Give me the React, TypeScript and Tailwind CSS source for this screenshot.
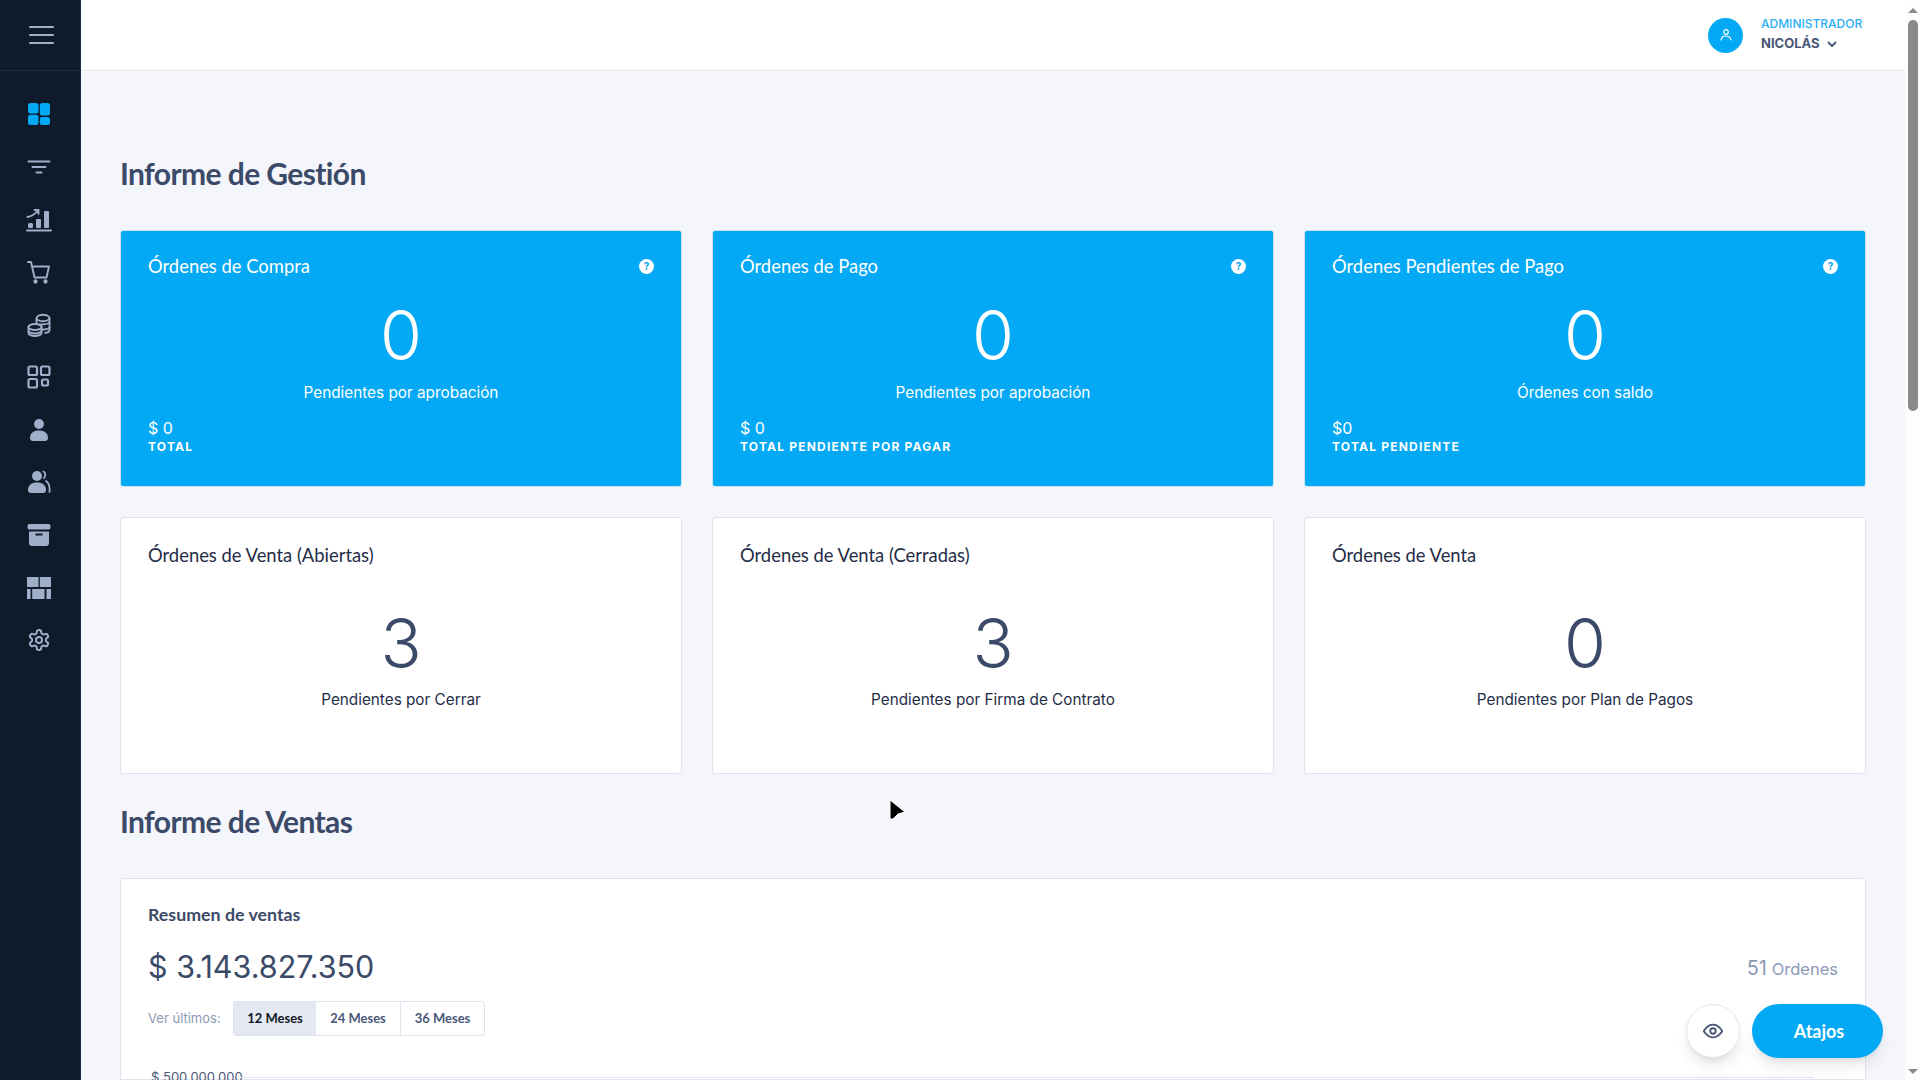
const titleFont = "font-['Lato',sans-serif]"

const blueCards = [
  { title: 'Órdenes de Compra', sub: 'Pendientes por aprobación', amount: '$ 0', label: 'TOTAL' },
  { title: 'Órdenes de Pago', sub: 'Pendientes por aprobación', amount: '$ 0', label: 'TOTAL PENDIENTE POR PAGAR' },
  { title: 'Órdenes Pendientes de Pago', sub: 'Órdenes con saldo', amount: '$0', label: 'TOTAL PENDIENTE' },
]

const whiteCards = [
  { title: 'Órdenes de Venta (Abiertas)', value: '3', sub: 'Pendientes por Cerrar' },
  { title: 'Órdenes de Venta (Cerradas)', value: '3', sub: 'Pendientes por Firma de Contrato' },
  { title: 'Órdenes de Venta', value: '0', sub: 'Pendientes por Plan de Pagos' },
]

function DashboardIcon() {
  return (
    <svg width="22" height="22" viewBox="0 0 22 22" fill="#03a9f4">
      <rect x="0" y="0" width="10.500" height="10.500" rx="2.500" />
      <rect x="11.800" y="0" width="10.200" height="12.500" rx="2.500" />
      <rect x="0" y="11.800" width="10.500" height="10.200" rx="2.500" />
      <rect x="11.800" y="14" width="10.200" height="8" rx="2.500" />
    </svg>
  )
}

function FilterIcon() {
  return (
    <svg width="24" height="24" viewBox="0 0 24 24" fill="none" stroke="#9fafc9" strokeWidth="2" strokeLinecap="round">
      <path d="M1.500 6.500h21M5.500 12h13M9.500 17.500h5" />
    </svg>
  )
}

function ChartIcon() {
  return (
    <svg className="mt-[3px]" width="26" height="26" viewBox="0 0 26 26" fill="#9fafc9">
      <rect x="2" y="15" width="5" height="5" rx="1.500" />
      <rect x="10" y="11" width="5" height="9" rx="1" />
      <rect x="18" y="3" width="5" height="17" rx="1" />
      <path d="M1 22.500h24" stroke="#9fafc9" strokeWidth="2" strokeLinecap="round" />
      <path d="M1.500 9C5 8.500 9 6 12 2.500M8.500 2h4v4" fill="none" stroke="#9fafc9" strokeWidth="1.800" strokeLinecap="round" />
    </svg>
  )
}

function CartIcon() {
  return (
    <svg width="24" height="24" viewBox="0 0 24 24" fill="none" stroke="#9fafc9" strokeWidth="1.900" strokeLinecap="round" strokeLinejoin="round">
      <path d="M1 2h3l3.500 15.500h12L22 6.500H5" />
      <circle cx="8.500" cy="21.500" r="1.200" fill="#9fafc9" />
      <circle cx="18.500" cy="21.500" r="1.200" fill="#9fafc9" />
    </svg>
  )
}

function CoinsIcon() {
  return (
    <svg width="24" height="24" viewBox="0 0 24 24" fill="none" stroke="#9fafc9" strokeWidth="1.900">
      <ellipse cx="16" cy="5" rx="6.500" ry="3.200" />
      <path d="M9.500 5v6M22.500 5v12c0 1.500-2 2.700-5 3" />
      <path d="M12 11.500c5 0 10.500-.5 10.500-2.500M15 16.500c3 0 7.500-.5 7.500-2.500" />
      <path d="M1.500 14v6c0 1.700 3 3 6.500 3s6.500-1.300 6.500-3v-6z" fill="#0f1a2b" />
      <ellipse cx="8" cy="14" rx="6.500" ry="3" fill="#0f1a2b" />
      <path d="M1.500 17.500c0 1.700 3 3 6.500 3s6.500-1.300 6.500-3" />
    </svg>
  )
}

function AppsIcon() {
  return (
    <svg width="24" height="24" viewBox="0 0 24 24" fill="none" stroke="#9fafc9" strokeWidth="2.200">
      <rect x="1.500" y="1.500" width="8.500" height="8.500" rx="1.500" />
      <rect x="14" y="1.500" width="8.500" height="8.500" rx="1.500" />
      <rect x="1.500" y="14" width="8.500" height="8.500" rx="1.500" />
      <rect x="15" y="14.500" width="6" height="6" rx="1.500" />
    </svg>
  )
}

function UserIcon() {
  return (
    <svg width="24" height="24" viewBox="0 0 24 24" fill="#9fafc9">
      <circle cx="12" cy="6" r="5" />
      <path d="M3 20c0-5 3.500-7.500 9-7.500s9 2.500 9 7.500c0 2-1 3-3 3H6c-2 0-3-1-3-3z" />
    </svg>
  )
}

function UsersIcon() {
  return (
    <svg width="24" height="24" viewBox="0 0 24 24" fill="#9fafc9">
      <circle cx="10" cy="6" r="5" />
      <path d="M1 20c0-5 3.500-7.500 9-7.500s9 2.500 9 7.500c0 2-1 3-3 3H4c-2 0-3-1-3-3z" />
      <path d="M16.500 1.500c2 1 2.500 4 .5 6.500M19 11c3 2 4 6 3.500 11" fill="none" stroke="#9fafc9" strokeWidth="1.800" strokeLinecap="round" />
    </svg>
  )
}

function ArchiveIcon() {
  return (
    <svg width="24" height="24" viewBox="0 0 24 24" fill="#9fafc9">
      <path d="M2.500 1h19a2 2 0 0 1 2 2v1.500a2 2 0 0 1-2 2h-19a2 2 0 0 1-2-2V3a2 2 0 0 1 2-2z" />
      <path d="M2 8.500h20V20a3 3 0 0 1-3 3H5a3 3 0 0 1-3-3z" />
      <rect x="8.500" y="10.500" width="7" height="2" fill="#0f1a2b" />
    </svg>
  )
}

function TableIcon() {
  return (
    <svg width="26" height="24" viewBox="0 0 26 24" fill="#9fafc9">
      <rect x="1" y="1" width="11.500" height="10" />
      <rect x="13.800" y="1" width="11.200" height="10" />
      <rect x="1" y="13" width="3.600" height="10" />
      <rect x="6.200" y="13" width="12.300" height="10" />
      <rect x="20.500" y="13" width="4.500" height="10" />
    </svg>
  )
}

function GearIcon() {
  return (
    <svg width="24" height="24" viewBox="0 0 24 24" fill="none" stroke="#9fafc9" strokeWidth="2" strokeLinecap="round" strokeLinejoin="round">
      <path d="M12.220 2h-.440a2 2 0 0 0-2 2v.180a2 2 0 0 1-1 1.730l-.430.250a2 2 0 0 1-2 0l-.150-.080a2 2 0 0 0-2.730.730l-.220.380a2 2 0 0 0 .730 2.730l.150.100a2 2 0 0 1 1 1.720v.510a2 2 0 0 1-1 1.740l-.150.090a2 2 0 0 0-.730 2.730l.220.380a2 2 0 0 0 2.730.730l.150-.080a2 2 0 0 1 2 0l.430.250a2 2 0 0 1 1 1.730V20a2 2 0 0 0 2 2h.440a2 2 0 0 0 2-2v-.180a2 2 0 0 1 1-1.730l.430-.250a2 2 0 0 1 2 0l.150.080a2 2 0 0 0 2.730-.730l.220-.390a2 2 0 0 0-.730-2.730l-.150-.080a2 2 0 0 1-1-1.740v-.500a2 2 0 0 1 1-1.740l.150-.090a2 2 0 0 0 .730-2.730l-.220-.380a2 2 0 0 0-2.730-.730l-.150.080a2 2 0 0 1-2 0l-.430-.250a2 2 0 0 1-1-1.730V4a2 2 0 0 0-2-2z" />
      <circle cx="12" cy="12" r="3" />
    </svg>
  )
}

const navIcons = [DashboardIcon, FilterIcon, ChartIcon, CartIcon, CoinsIcon, AppsIcon, UserIcon, UsersIcon, ArchiveIcon, TableIcon, GearIcon]

function Sidebar() {
  return (
    <aside className="w-[81px] shrink-0 bg-[#0f1a2b] border-r border-[#1c2d4d] flex flex-col">
      <div className="h-[71px] shrink-0 border-b border-[#1c2d4d] flex items-center justify-center pl-[2px]">
        <div className="w-[25px] flex flex-col gap-[6px]">
          <div className="h-[2px] rounded bg-[#9fafc9]" />
          <div className="h-[2px] rounded bg-[#9fafc9]" />
          <div className="h-[2px] rounded bg-[#9fafc9]" />
        </div>
      </div>
      <nav className="pt-[17px] pr-[2px] flex flex-col">
        {navIcons.map((Icon, i) => (
          <div key={i} className="h-[52.6px] flex items-center justify-center">
            <Icon />
          </div>
        ))}
      </nav>
    </aside>
  )
}

function Header() {
  return (
    <header className="h-[71px] shrink-0 bg-white border-b border-[#e6e9f2] flex items-center justify-end pr-[43px]">
      <div className="w-[35px] h-[35px] rounded-full bg-[#03a9f4] flex items-center justify-center mr-[18px]">
        <svg width="14" height="14" viewBox="0 0 14 14" fill="none" stroke="#fff" strokeWidth="1.200" strokeLinecap="round">
          <circle cx="7" cy="4" r="2.300" />
          <path d="M2 12c.5-2.500 2.500-4 5-4s4.500 1.500 5 4" />
        </svg>
      </div>
      <div className="w-[101px] font-['Inter',sans-serif] pb-[3px]">
        <div className="text-[12px] font-medium leading-[20px] text-[#2aaef5]">ADMINISTRADOR</div>
        <div className="flex items-center gap-[7px] text-[13px] font-bold leading-[19px] text-[#4a5876]">
          NICOLÁS
          <svg width="10" height="10" viewBox="0 0 10 10" fill="none" stroke="#4a5876" strokeWidth="1.800" strokeLinecap="round" strokeLinejoin="round">
            <path d="M1.500 3.500 5 7l3.500-3.500" />
          </svg>
        </div>
      </div>
    </header>
  )
}

function HelpDot() {
  return (
    <div className="w-[15px] h-[15px] rounded-full bg-white flex items-center justify-center text-[10px] font-bold leading-none text-[#03a9f4] font-['Inter',sans-serif]">
      ?
    </div>
  )
}

function BlueCard({ title, sub, amount, label }: { title: string; sub: string; amount: string; label: string }) {
  return (
    <div className="h-[257px] rounded-[3px] bg-[#03a9f4] border border-[#cfe3f3] px-[27px] pt-[23px] text-white flex flex-col">
      <div className="flex items-center justify-between">
        <h3 className={`${titleFont} text-[18.400px] leading-[24px] font-normal`}>{title}</h3>
        <HelpDot />
      </div>
      <div className="mt-[21px] text-center font-['Inter',sans-serif] text-[68px] leading-[72px] font-light">0</div>
      <div className="mt-[11px] text-center font-['Inter',sans-serif] text-[15.300px] leading-[22px]">{sub}</div>
      <div className="mt-[13px] font-['Inter',sans-serif] text-[16px] leading-[22px]">{amount}</div>
      <div className="font-['Inter',sans-serif] text-[12px] leading-[15px] font-bold tracking-[1.200px]">{label}</div>
    </div>
  )
}

function WhiteCard({ title, value, sub }: { title: string; value: string; sub: string }) {
  return (
    <div className="h-[257px] rounded-[3px] bg-white border border-[#dfe3ee] px-[27px] pt-[24px] text-[#3b4a68] flex flex-col">
      <h3 className={`${titleFont} text-[18.400px] leading-[26px] font-normal text-[#1f2d47]`}>{title}</h3>
      <div className="mt-[39px] text-center font-['Inter',sans-serif] text-[68px] leading-[72px] font-light">{value}</div>
      <div className="mt-[10px] text-center font-['Inter',sans-serif] text-[15.300px] leading-[22px] text-[#1f2d47]">{sub}</div>
    </div>
  )
}

function SalesCard() {
  return (
    <div className="flex-1 rounded-t-[3px] bg-white border border-[#dfe3ee] px-[27px] pt-[23px]">
      <h3 className={`${titleFont} text-[17.800px] leading-[25px] font-bold text-[#3b4a68]`}>Resumen de ventas</h3>
      <div className="mt-[20px] flex items-end justify-between">
        <div className="font-['Inter',sans-serif] text-[30.500px] leading-[40px] text-[#3b4a68]">$ 3.143.827.350</div>
        <div className="mb-[4px] font-['Inter',sans-serif] text-[16.500px] leading-[28px] text-[#8a9ab5]">
          <span className="text-[20px]">51</span> Ordenes
        </div>
      </div>
      <div className="mt-[14px] flex items-center">
        <span className="font-['Inter',sans-serif] text-[13px] text-[#8a9ab5] w-[85px]">Ver últimos:</span>
        <div className="flex h-[35px] rounded-[3px] border border-[#dfe3ee] overflow-hidden font-['Lato',sans-serif] text-[13px] font-bold">
          <div className="w-[82px] bg-[#e4e8f2] text-[#111827] flex items-center justify-center">12 Meses</div>
          <div className="w-[85px] border-r border-[#dfe3ee] text-[#4a5876] flex items-center justify-center">24 Meses</div>
          <div className="w-[83px] text-[#4a5876] flex items-center justify-center">36 Meses</div>
        </div>
      </div>
      <div className="mt-[33px] flex items-center">
        <span className="font-['Inter',sans-serif] text-[13px] leading-[16px] text-[#4a5876] pl-[3px] w-[90px] whitespace-nowrap">$ 500.000.000</span>
        <div className="flex-1 h-px bg-[#dfe3ee] mr-[24px]" />
      </div>
    </div>
  )
}

function Scrollbar() {
  return (
    <div className="w-[15px] shrink-0 bg-[#fdfdfd] flex flex-col pl-[3px]">
      <div className="h-[20px] w-[10px] flex items-center justify-center">
        <div className="w-0 h-0 border-x-[5px] border-x-transparent border-b-[5px] border-b-[#8a8a8a]" />
      </div>
      <div className="w-[10px] h-[391px] rounded-full bg-[#8a8a8a]" />
      <div className="flex-1" />
      <div className="h-[17px] w-[10px] flex items-center justify-center">
        <div className="w-0 h-0 border-x-[5px] border-x-transparent border-t-[5px] border-t-[#8a8a8a]" />
      </div>
    </div>
  )
}

export default function App() {
  return (
    <div className="relative h-screen w-full flex overflow-hidden bg-[#f4f6fb]">
      <Sidebar />
      <div className="flex-1 min-w-0 flex flex-col">
        <Header />
        <main className="flex-1 min-h-0 pl-[39px] pr-[39px] flex flex-col overflow-hidden">
          <h1 className={`${titleFont} mt-[80px] text-[30px] leading-[44px] font-bold text-[#3b4a68] tracking-[-0.600px]`}>Informe de Gestión</h1>
          <div className="mt-[35px] grid grid-cols-3 gap-[30px]">
            {blueCards.map((c) => (
              <BlueCard key={c.title} {...c} />
            ))}
            {whiteCards.map((c) => (
              <WhiteCard key={c.title} {...c} />
            ))}
          </div>
          <h2 className={`${titleFont} mt-[25px] text-[30px] leading-[44px] font-bold text-[#3b4a68] tracking-[-0.600px]`}>Informe de Ventas</h2>
          <div className="mt-[35px] flex-1 flex min-h-0">
            <SalesCard />
          </div>
        </main>
      </div>
      <Scrollbar />

      {/* floating buttons */}
      <div className="absolute left-[1686px] top-[1004px] w-[54px] h-[54px] rounded-full bg-white border border-[#e2e6f0] shadow-lg flex items-center justify-center">
        <svg width="22" height="22" viewBox="0 0 24 24" fill="none" stroke="#4a5876" strokeWidth="2" strokeLinecap="round" strokeLinejoin="round">
          <path d="M2 12s3.500-7 10-7 10 7 10 7-3.500 7-10 7-10-7-10-7z" />
          <circle cx="12" cy="12" r="3" />
        </svg>
      </div>
      <div className={`${titleFont} absolute left-[1752px] top-[1004px] w-[131px] h-[54px] rounded-full bg-[#03a9f4] shadow-lg text-white text-[18px] font-bold flex items-center justify-center pl-[3px]`}>
        Atajos
      </div>

      {/* mouse cursor */}
      <svg className="absolute left-[888px] top-[798px]" width="20" height="24" viewBox="0 0 20 24">
        <path d="M2 2 17 14 10 16 5 21H2z" fill="#000" stroke="#fff" strokeWidth="1" strokeLinejoin="round" />
      </svg>
    </div>
  )
}
